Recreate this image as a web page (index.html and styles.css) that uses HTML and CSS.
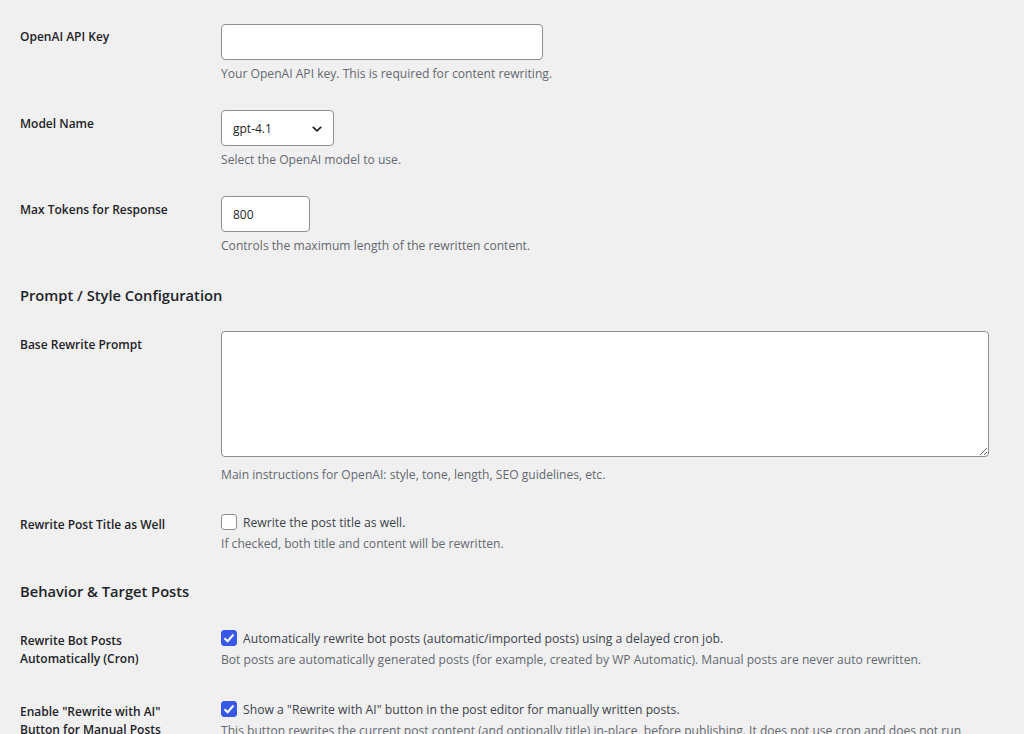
FILE: index.html
```html
<!DOCTYPE html>
<html lang="en">
<head>
<meta charset="utf-8">
<title>Settings</title>
<link rel="stylesheet" href="styles.css">
</head>
<body>
<div class="wrap">
  <div class="form-table">
    <div class="row">
      <div class="th th-first">OpenAI API Key</div>
      <div class="td">
        <input class="text-input key-input" type="text" value="">
        <p class="desc">Your OpenAI API key. This is required for content rewriting.</p>
      </div>
    </div>
    <div class="row">
      <div class="th">Model Name</div>
      <div class="td">
        <div class="select">
          <span>gpt-4.1</span>
          <svg class="chev" width="12" height="8" viewBox="0 0 12 8"><path d="M1.8 1.8 L6 5.8 L10.2 1.8" fill="none" stroke="#1d2327" stroke-width="1.7"/></svg>
        </div>
        <p class="desc">Select the OpenAI model to use.</p>
      </div>
    </div>
    <div class="row">
      <div class="th">Max Tokens for Response</div>
      <div class="td">
        <input class="text-input num-input" type="text" value="800">
        <p class="desc">Controls the maximum length of the rewritten content.</p>
      </div>
    </div>
  </div>

  <h2 class="section">Prompt / Style Configuration</h2>

  <div class="form-table">
    <div class="row">
      <div class="th">Base Rewrite Prompt</div>
      <div class="td">
        <textarea class="prompt"></textarea>
        <p class="desc desc-area">Main instructions for OpenAI: style, tone, length, SEO guidelines, etc.</p>
      </div>
    </div>
    <div class="row">
      <div class="th">Rewrite Post Title as Well</div>
      <div class="td">
        <label class="check-line"><span class="cb"></span>Rewrite the post title as well.</label>
        <p class="desc desc-check">If checked, both title and content will be rewritten.</p>
      </div>
    </div>
  </div>

  <h2 class="section section-second">Behavior &amp; Target Posts</h2>

  <div class="form-table">
    <div class="row">
      <div class="th">Rewrite Bot Posts<br>Automatically (Cron)</div>
      <div class="td td-loose">
        <label class="check-line"><span class="cb checked"><svg width="12" height="10" viewBox="0 0 12 10"><path d="M1.5 5.2 L4.6 8.2 L10.5 1.5" fill="none" stroke="#fff" stroke-width="2"/></svg></span>Automatically rewrite bot posts (automatic/imported posts) using a delayed cron job.</label>
        <p class="desc desc-check">Bot posts are automatically generated posts (for example, created by WP Automatic). Manual posts are never auto rewritten.</p>
      </div>
    </div>
    <div class="row">
      <div class="th">Enable "Rewrite with AI"<br>Button for Manual Posts</div>
      <div class="td">
        <label class="check-line"><span class="cb checked"><svg width="12" height="10" viewBox="0 0 12 10"><path d="M1.5 5.2 L4.6 8.2 L10.5 1.5" fill="none" stroke="#fff" stroke-width="2"/></svg></span>Show a "Rewrite with AI" button in the post editor for manually written posts.</label>
        <p class="desc desc-check">This button rewrites the current post content (and optionally title) in-place, before publishing. It does not use cron and does not run automatically.</p>
      </div>
    </div>
  </div>
</div>
</body>
</html>
```

FILE: styles.css
```css
html, body {
  margin: 0;
  padding: 0;
  background: #f0f0f1;
}
body {
  font-family: "Open Sans", "Noto Sans", sans-serif;
  color: #1d2327;
  font-size: 12px;
  overflow: hidden;
  height: 734px;
}
.wrap {
  padding: 9px 0 0 20px;
}
.row {
  display: flex;
}
.th {
  width: 201px;
  flex: none;
  padding-top: 20px;
  font-weight: 600;
  font-size: 12px;
  line-height: 18px;
  color: #1d2327;
}
.th-first {
  padding-top: 19px;
}
.td {
  flex: 1;
  padding: 15px 0 12px;
}
.td-loose {
  padding-bottom: 14px;
}
.text-input {
  display: block;
  box-sizing: border-box;
  height: 36px;
  border: 1px solid #8c8f94;
  border-radius: 4px;
  background: #fff;
  padding: 0 11px;
  font-family: inherit;
  font-size: 12px;
  color: #1d2327;
  margin: 0;
}
.key-input { width: 322px; }
.num-input { width: 89px; }
.select {
  box-sizing: border-box;
  width: 113px;
  height: 36px;
  border: 1px solid #8c8f94;
  border-radius: 4px;
  background: #fff;
  display: flex;
  align-items: center;
  justify-content: space-between;
  padding: 0 10px 0 11px;
  font-size: 12px;
}
.chev { margin-top: 1px; }
.desc {
  margin: 5px 0 0;
  font-size: 12.1px;
  line-height: 18px;
  color: #646970;
}
.desc-area { margin-top: 9px; }
.desc-check { margin-top: 2px; }
.prompt {
  display: block;
  box-sizing: border-box;
  width: 768px;
  height: 126px;
  border: 1px solid #8c8f94;
  border-radius: 4px;
  background: #fff;
  margin: 0;
  resize: vertical;
}
.check-line {
  display: flex;
  align-items: center;
  height: 22px;
  font-size: 12.2px;
  color: #3c434a;
}
.cb {
  box-sizing: border-box;
  width: 16px;
  height: 16px;
  border: 1px solid #8c8f94;
  border-radius: 3px;
  background: #fff;
  margin-right: 6px;
  display: flex;
  align-items: center;
  justify-content: center;
  flex: none;
}
.cb.checked {
  background: #3858e9;
  border-color: #3858e9;
}
.section {
  margin: 18px 0 11px;
  font-size: 14.7px;
  line-height: 20px;
  font-weight: 600;
  color: #1d2327;
}
.section-second {
  margin-top: 16px;
}
```
